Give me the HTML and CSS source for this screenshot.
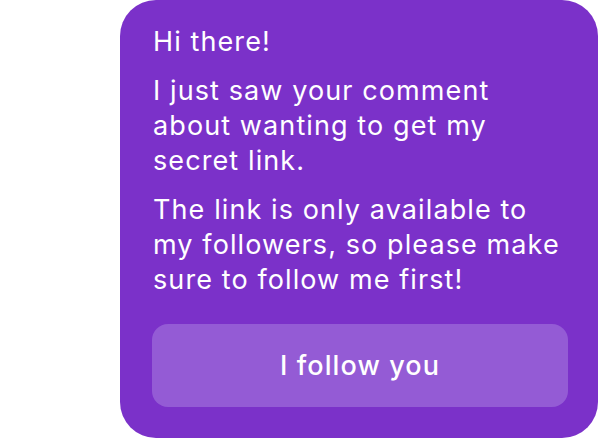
FILE: index.html
```html
<!DOCTYPE html>
<html lang="en">
<head>
  <meta charset="UTF-8" />
  <meta name="viewport" content="width=device-width, initial-scale=1.0"/>
  <title>Message</title>
  <link rel="stylesheet" href="styles.css">
</head>
<body>

<div class="bubble">
  <div class="message">
    <p>Hi there!</p>
    <p>I just saw your comment about wanting to get my secret link.</p>
    <p>The link is only available to my followers, so please make sure to follow me first!</p>
  </div>
  <button class="follow">I follow you</button>
</div>

</body>
</html>
```

FILE: styles.css
```css
body {
  font-family: Inter, "Noto Sans", sans-serif;
  margin: 0; padding: 0;
  background: #ffffff;
}
.bubble {
  box-sizing: border-box;
  width: 478px;
  height: 438px;
  margin-left: 120px;
  padding: 24px 30px 31px 33px;
  background: #7b31c9;
  border-radius: 36px;
  display: flex;
  flex-direction: column;
}
.message {
  color: #ffffff;
  font-size: 27px;
  line-height: 35px;
  letter-spacing: 1.1px;
  max-width: 412px;
}
.message p {
  margin: 0 0 14px 0;
}
.follow {
  margin-top: auto;
  margin-left: -1px;
  height: 83px;
  border: none;
  border-radius: 16px;
  background: #945bd5;
  color: #ffffff;
  font-family: Inter, "Noto Sans", sans-serif;
  font-size: 27px;
  font-weight: 500;
  letter-spacing: 1.1px;
  cursor: pointer;
}
```
